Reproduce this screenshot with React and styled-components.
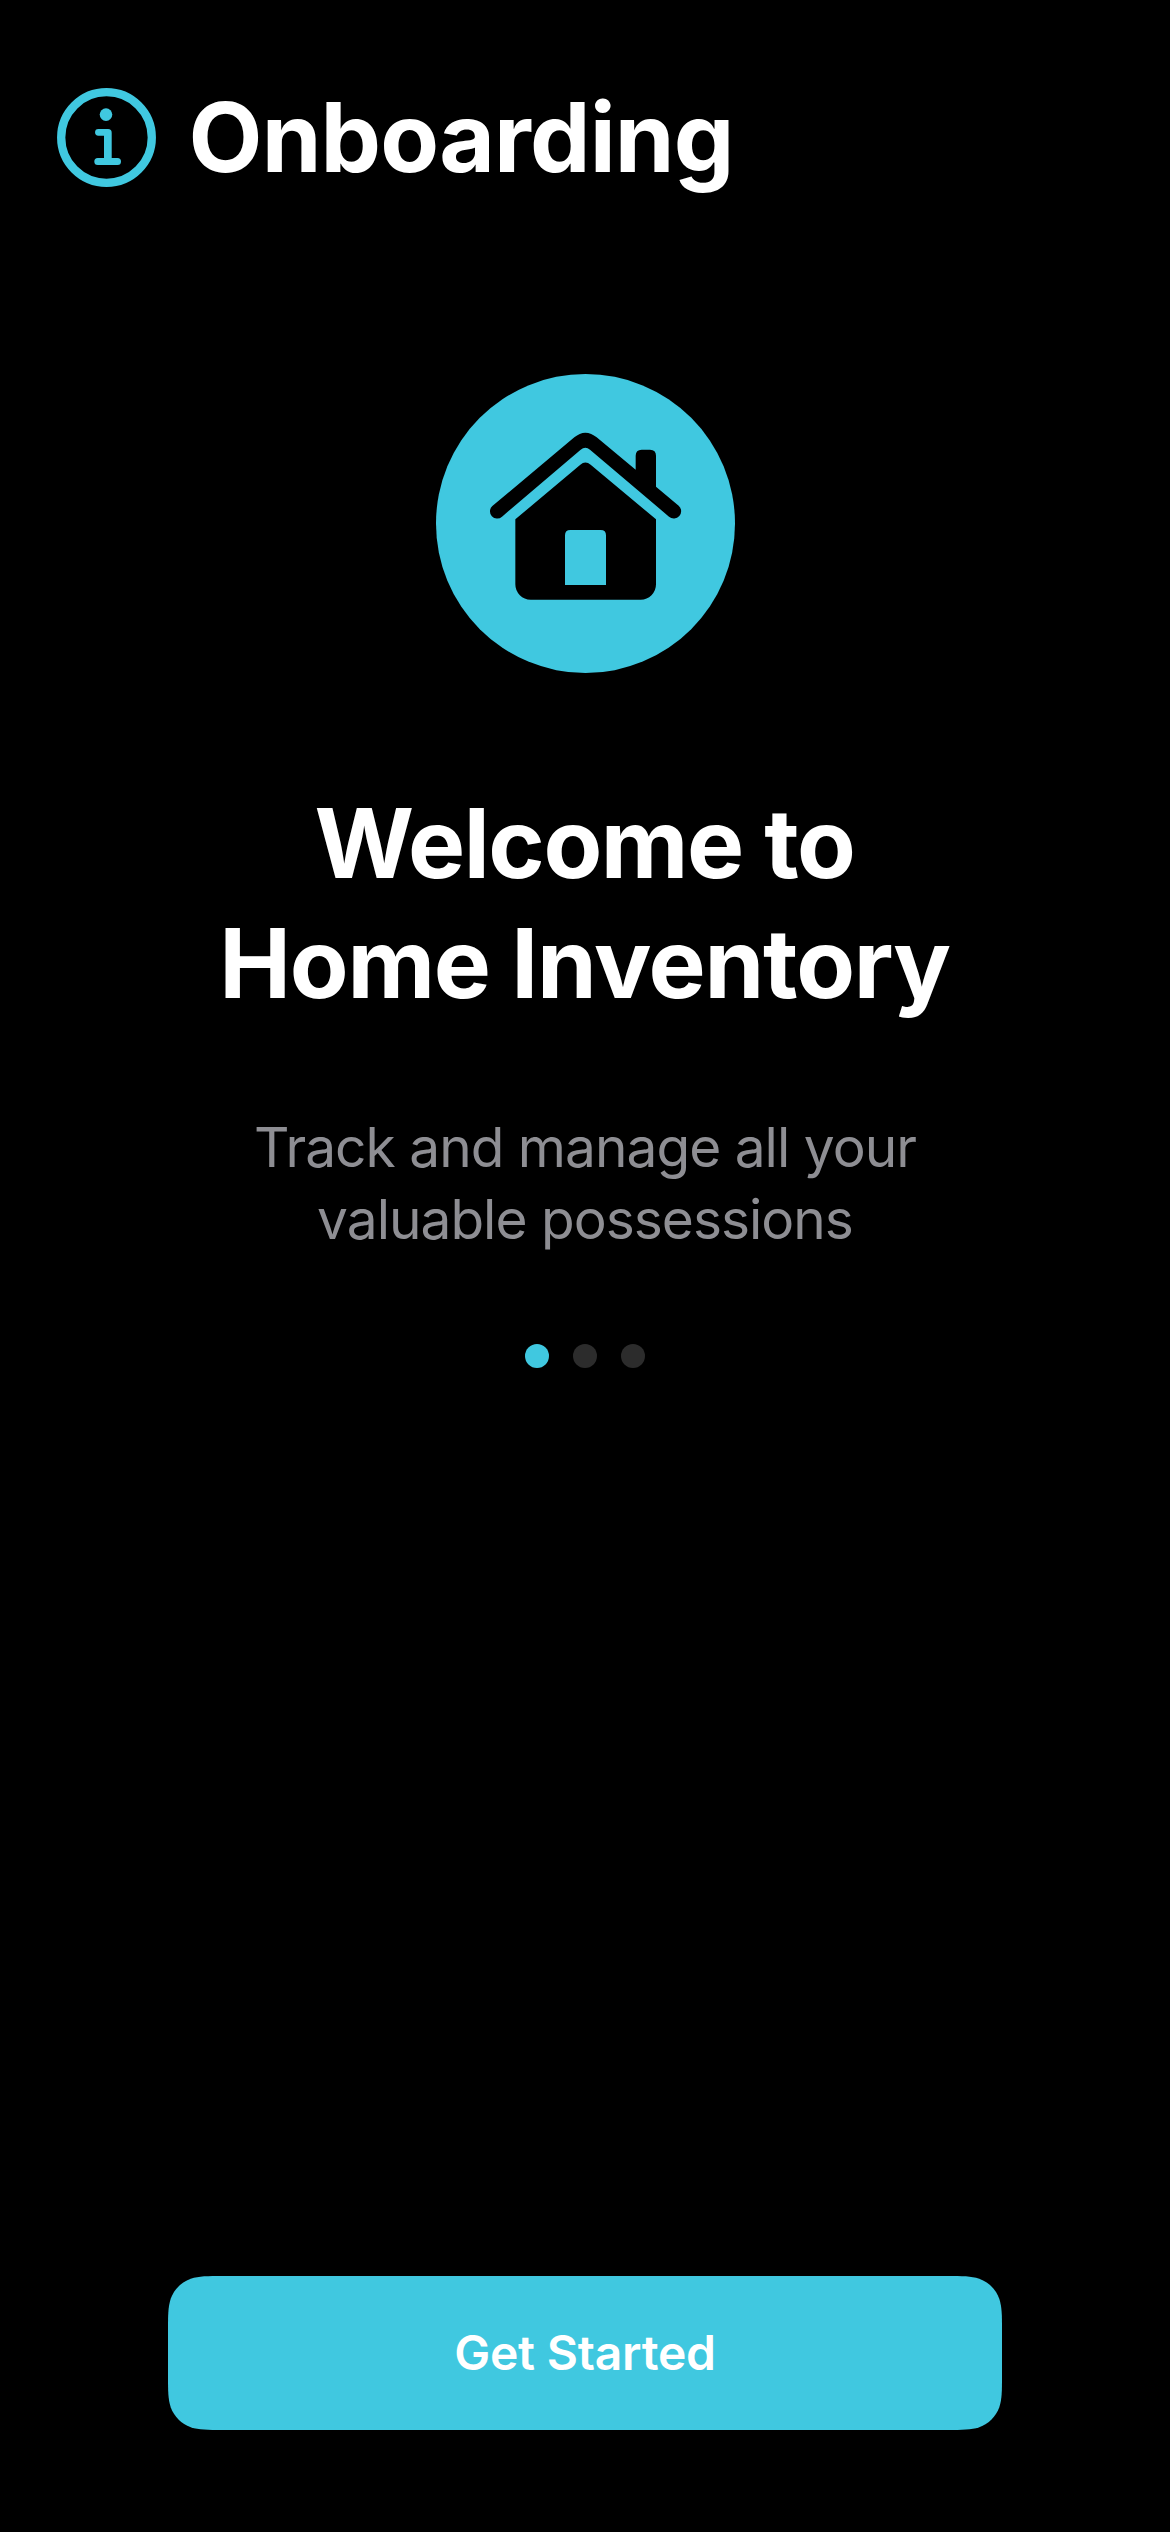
import React from "react";
import styled, { createGlobalStyle } from "styled-components";

const accent = "#40c8e0";

const GlobalStyle = createGlobalStyle`
  * { box-sizing: border-box; }
  body { margin: 0; background: #000; }
`;

const Screen = styled.div`
  display: flex;
  flex-direction: column;
  width: 1170px;
  height: 2532px;
  padding: 77px 0 102px;
  background: #000;
  color: #fff;
  font-family: Inter, Roboto, "Liberation Sans", sans-serif;
`;

const Header = styled.header`
  display: flex;
  align-items: center;
  gap: 32.5px;
  height: 120px;
  padding-left: 57px;
`;

const InfoIcon = styled.svg`
  flex: none;
  width: 99px;
  height: 99px;
  margin-top: 1px;
`;

const HeaderTitle = styled.h1`
  margin: 0;
  font-size: 96px;
  font-weight: 700;
  line-height: 120px;
  letter-spacing: -0.84px;
`;

const Content = styled.main`
  flex: 1;
  display: flex;
  flex-direction: column;
  align-items: center;
  padding-top: 177px;
`;

const HeroBadge = styled.div`
  display: grid;
  place-items: center;
  width: 299px;
  height: 299px;
  border-radius: 50%;
  background: ${accent};

  svg {
    width: 100%;
    height: 100%;
  }
`;

const Title = styled.h2`
  display: flex;
  flex-direction: column;
  align-items: center;
  margin: 110px 0 0;
  padding-right: 1px;
  font-size: 96px;
  font-weight: 700;
  line-height: 120px;
`;

const TitleLine = styled.span`
  letter-spacing: ${(p) => p.$tracking}px;
  white-space: nowrap;
`;

const Subtitle = styled.p`
  margin: 88px 0 0;
  color: #8e8e93;
  font-size: 55px;
  font-weight: 400;
  line-height: 72px;
  letter-spacing: -0.98px;
  text-align: center;
`;

const Pager = styled.div`
  display: flex;
  gap: 24px;
  margin-top: 89px;
`;

const Dot = styled.span`
  width: 24px;
  height: 24px;
  border-radius: 50%;
  background: ${(p) => (p.$active ? accent : "#2c2c2c")};
`;

const Footer = styled.footer`
  display: flex;
  justify-content: center;
`;

/* Continuous-curvature corners, 36px nominal radius. */
const PrimaryButton = styled.button`
  width: 834px;
  height: 154px;
  padding: 0;
  border: 0;
  background: ${accent};
  color: #fff;
  font: inherit;
  font-size: 48px;
  font-weight: 600;
  line-height: 60px;
  letter-spacing: -0.22px;
  clip-path: path(
    "M55.03 0 H778.97 C794.81 0 802.74 0 811.27 2.7 C820.58 6.09 827.91 13.42 831.3 22.73 C834 31.26 834 39.19 834 55.03 V98.97 C834 114.81 834 122.74 831.3 131.27 C827.91 140.58 820.58 147.91 811.27 151.3 C802.74 154 794.81 154 778.97 154 H55.03 C39.19 154 31.26 154 22.73 151.3 C13.42 147.91 6.09 140.58 2.7 131.27 C0 122.74 0 114.81 0 98.97 V55.03 C0 39.19 0 31.26 2.7 22.73 C6.09 13.42 13.42 6.09 22.73 2.7 C31.26 0 39.19 0 55.03 0 Z"
  );
`;

const HouseGlyph = () => (
  <svg viewBox="48 42 897 897" aria-hidden="true">
    <path d="M217 438 L463 232 Q479 218 496 218 Q514 218 530 232 L647 329 V287 Q647 269 665 269 H690 Q708 269 708 287 V380 L776 437 A21.5 21.5 0 0 1 747 470 L510 269 Q496 258 482 269 L246 470 A21.5 21.5 0 0 1 217 438 Z" />
    <path
      fillRule="evenodd"
      d="M286 478 L481 314 Q496 301 512 314 L708 478 V673 A46 46 0 0 1 662 719 H332 A46 46 0 0 1 286 673 Z M435 675 H558 V526 Q558 510 542 510 H451 Q435 510 435 526 Z"
    />
  </svg>
);

export default function App() {
  return (
    <>
      <GlobalStyle />
      <Screen>
        <Header>
          <InfoIcon viewBox="0 0 99 99" fill="none" stroke={accent} aria-hidden="true">
            <circle cx="49.5" cy="49.5" r="45.3" strokeWidth="8.3" />
            <circle cx="49" cy="26.6" r="6.3" fill={accent} stroke="none" />
            <path
              fill={accent}
              stroke="none"
              d="M41.4 41 H51 Q54.7 41 54.7 44.7 V70 H60.5 A3.5 3.5 0 0 1 60.5 77 H40.8 A3.5 3.5 0 0 1 40.8 70 H47 V47.7 H41.4 A3.35 3.35 0 0 1 41.4 41 Z"
            />
          </InfoIcon>
          <HeaderTitle>Onboarding</HeaderTitle>
        </Header>
        <Content>
          <HeroBadge>
            <HouseGlyph />
          </HeroBadge>
          <Title>
            <TitleLine $tracking={-1.42}>Welcome to</TitleLine>
            <TitleLine $tracking={-1.21}>Home Inventory</TitleLine>
          </Title>
          <Subtitle>
            Track and manage all your
            <br />
            valuable possessions
          </Subtitle>
          <Pager>
            <Dot $active />
            <Dot />
            <Dot />
          </Pager>
        </Content>
        <Footer>
          <PrimaryButton type="button">Get Started</PrimaryButton>
        </Footer>
      </Screen>
    </>
  );
}
